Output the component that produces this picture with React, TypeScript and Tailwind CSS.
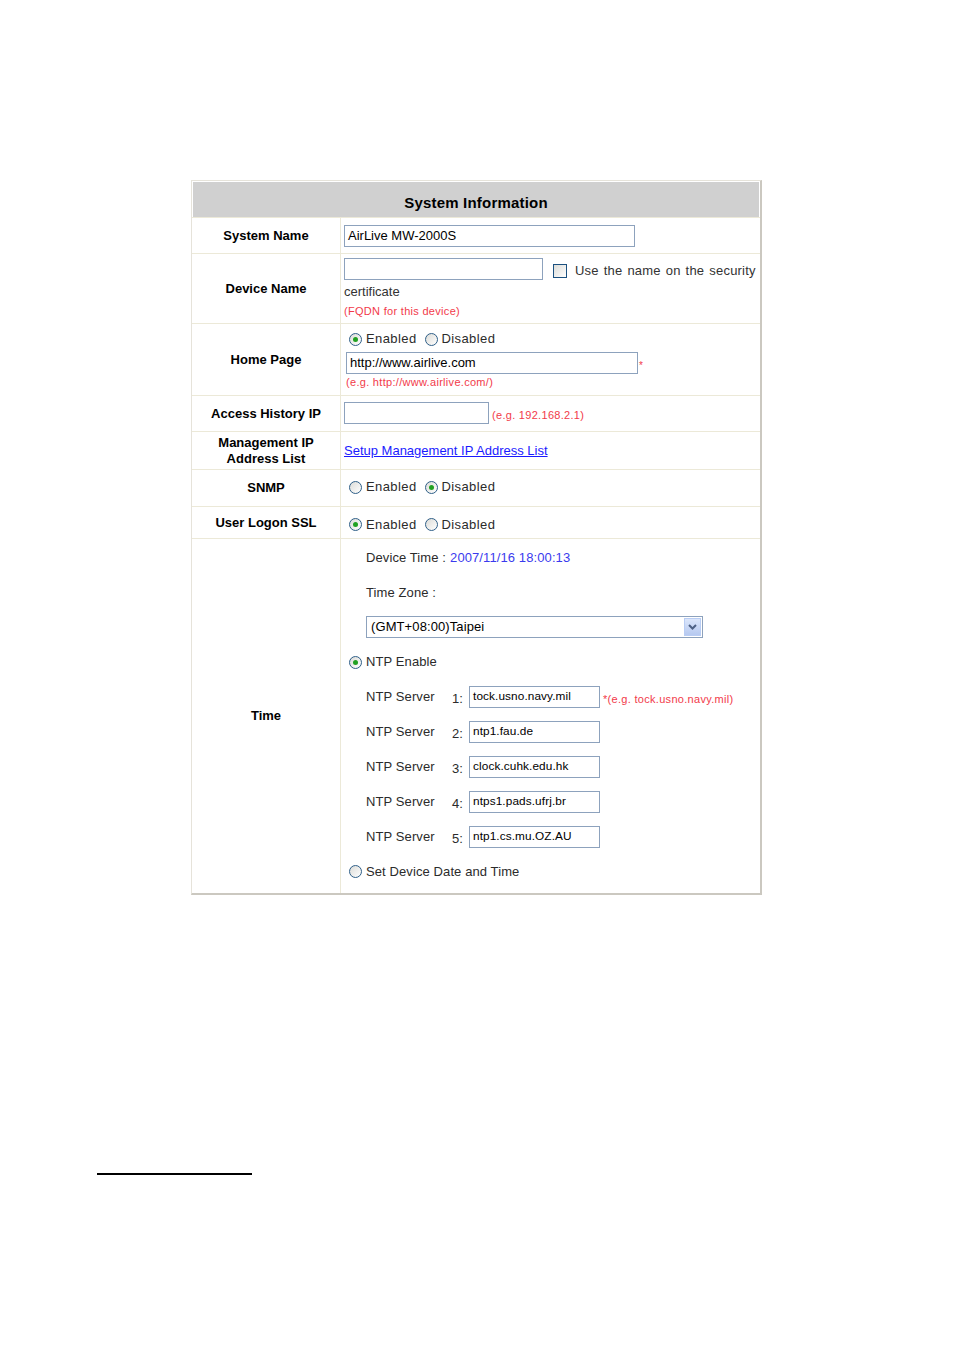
import React from 'react'

const font = { fontFamily: '"Liberation Sans", Arial, sans-serif' }

function Radio({ checked }: { checked?: boolean }) {
  return (
    <span className="inline-flex items-center justify-center w-[13px] h-[13px] rounded-full border border-[#2f5f88] bg-gradient-to-br from-[#dcdcd8] to-white mr-[4px] shrink-0">
      {checked && <span className="w-[5px] h-[5px] rounded-full bg-[#21a121]" />}
    </span>
  )
}

function RadioPair({ on }: { on: 'en' | 'dis' }) {
  return (
    <div className="flex items-center text-[13px] leading-[18px] tracking-[0.4px] text-[#2b2b2b]">
      <Radio checked={on === 'en'} />
      <span>Enabled</span>
      <span className="w-[8px]" />
      <Radio checked={on === 'dis'} />
      <span>Disabled</span>
    </div>
  )
}

function Input({ value, w, small }: { value?: string; w: number; small?: boolean }) {
  return (
    <div
      className={`h-[22px] shrink-0 border border-[#8da2bd] bg-white flex items-center px-[3px] text-black ${small ? 'text-[11.8px]' : 'text-[13px]'}`}
      style={{ width: w }}
    >
      {value}
    </div>
  )
}

function Row({ label, h, children, center = true }: { label: React.ReactNode; h: number; children: React.ReactNode; center?: boolean }) {
  return (
    <div className="flex border-t border-[#ece9d8]" style={{ height: h }}>
      <div className="w-[149px] shrink-0 flex items-center justify-center text-center text-[13px] font-bold text-black leading-[16px] border-r border-[#ece9d8]">
        {label}
      </div>
      <div className={`flex-1 min-w-0 pl-[3px] flex flex-col ${center ? 'justify-center' : ''}`}>{children}</div>
    </div>
  )
}

const hint = 'text-[11px] tracking-[0.3px] text-[#f23a4a] leading-[13px] whitespace-nowrap'

export default function App() {
  const servers = ['tock.usno.navy.mil', 'ntp1.fau.de', 'clock.cuhk.edu.hk', 'ntps1.pads.ufrj.br', 'ntp1.cs.mu.OZ.AU']
  return (
    <div className="w-[954px] h-[1350px] bg-white relative" style={font}>
      <div className="pt-[180px] pl-[191px]">
        <div className="w-[571px] border-l border-t border-[#e6e3da] border-r-2 border-b-2 border-r-[#cbc8c0] border-b-[#cbc8c0] bg-white">
          <div className="mx-[1px] mt-[1px] h-[35px] bg-[#d0d0d0] flex items-end justify-center pb-[3px] text-[15px] font-bold text-black tracking-[0.2px]">
            System Information
          </div>

          <Row label="System Name" h={36}>
            <Input value="AirLive MW-2000S" w={291} />
          </Row>

          <Row label="Device Name" h={70} center={false}>
            <div className="flex items-center h-[22px] mt-[4px] whitespace-nowrap">
              <Input w={199} />
              <span className="ml-[10px] mt-[3px] w-[14px] h-[14px] shrink-0 border border-[#1c5180] bg-gradient-to-br from-[#dcdcd8] to-white" />
              <span className="ml-[8px] mt-[4px] shrink-0 text-[13px] leading-[16px] text-[#333] [word-spacing:1.2px] tracking-[0.2px]">Use the name on the security</span>
            </div>
            <div className="text-[13px] text-[#333] mt-[3px] leading-[18px]">certificate</div>
            <div className={`${hint} mt-[4px]`}>(FQDN for this device)</div>
          </Row>

          <Row label="Home Page" h={72} center={false}>
            <div className="mt-[6px] ml-[5px]">
              <RadioPair on="en" />
            </div>
            <div className="flex items-start mt-[4px] ml-[2px]">
              <Input value="http://www.airlive.com" w={292} />
              <span className="text-[#f23a4a] text-[10px] mt-[6px] ml-[1px]">*</span>
            </div>
            <div className={`${hint} ml-[2px] mt-[2px]`}>(e.g. http://www.airlive.com/)</div>
          </Row>

          <Row label="Access History IP" h={36}>
            <div className="flex items-center -mt-[1px]">
              <Input w={145} />
              <span className={`${hint} ml-[3px] mt-[4px]`}>(e.g. 192.168.2.1)</span>
            </div>
          </Row>

          <Row label={<span>Management IP<br />Address List</span>} h={38}>
            <a className="text-[13px] text-[#1a1aff] underline" href="#">Setup Management IP Address List</a>
          </Row>

          <Row label="SNMP" h={37}>
            <div className="ml-[5px] -mt-[2px]">
              <RadioPair on="dis" />
            </div>
          </Row>

          <Row label="User Logon SSL" h={32}>
            <div className="ml-[5px] mt-[4px]">
              <RadioPair on="en" />
            </div>
          </Row>

          <Row label="Time" h={355} center={false}>
            <div className="pt-[1px] text-[13px] text-[#2b2b2b] tracking-[0.1px]">
              <div className="h-[34.9px] flex items-center pl-[22px]">
                Device Time :<span className="ml-[4px] text-[#3a3aee]">2007/11/16 18:00:13</span>
              </div>
              <div className="h-[34.9px] flex items-center pl-[22px]">Time Zone :</div>
              <div className="h-[34.9px] flex items-center pl-[22px]">
                <div className="w-[337px] h-[22px] border border-[#8da2bd] flex items-center justify-between pl-[4px] pr-[1px] text-black">
                  <span>(GMT+08:00)Taipei</span>
                  <span className="w-[17px] h-[18px] bg-gradient-to-b from-[#dbe6fb] to-[#b6c9f0] border border-[#b9cdf4] flex items-center justify-center">
                    <svg width="9" height="6" viewBox="0 0 9 6">
                      <path d="M1 1 L4.5 4.5 L8 1" stroke="#4d6185" strokeWidth="2" fill="none" />
                    </svg>
                  </span>
                </div>
              </div>
              <div className="h-[34.9px] flex items-center pl-[5px]">
                <Radio checked />
                <span>NTP Enable</span>
              </div>
              {servers.map((s, i) => (
                <div key={s} className="h-[34.9px] flex items-center pl-[22px]">
                  <span className="w-[86px]">NTP Server</span>
                  <span className="w-[17px] mt-[4px]">{i + 1}:</span>
                  <Input value={s} w={131} small />
                  {i === 0 && <span className={`${hint} ml-[3px] mt-[5px]`}>*(e.g. tock.usno.navy.mil)</span>}
                </div>
              ))}
              <div className="h-[34.9px] flex items-center pl-[5px]">
                <Radio />
                <span>Set Device Date and Time</span>
              </div>
            </div>
          </Row>
        </div>
      </div>

      <div className="absolute left-[97px] top-[1173px] w-[155px] h-[2px] bg-black" />
    </div>
  )
}
